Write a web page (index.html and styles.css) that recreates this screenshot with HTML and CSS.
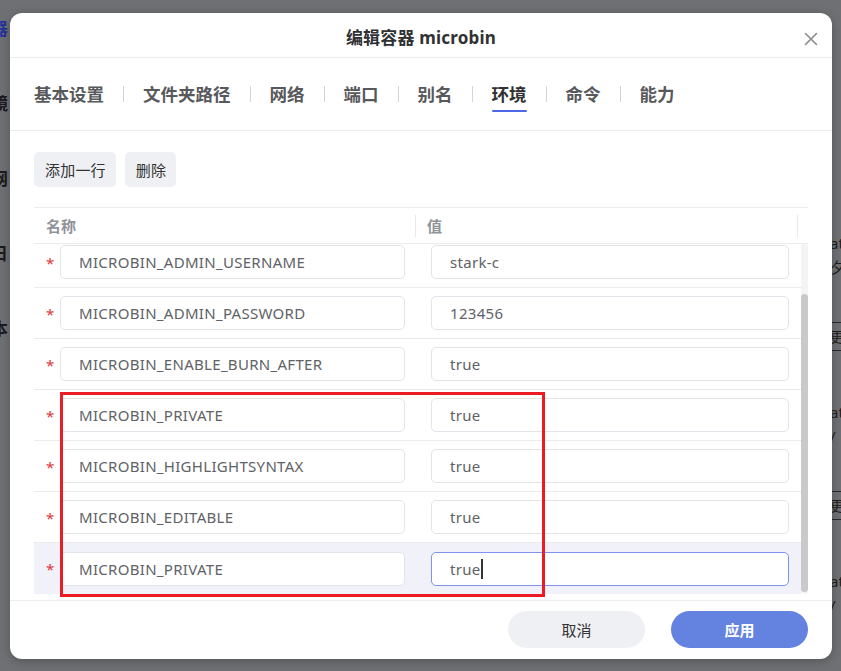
FILE: index.html
```html
<!DOCTYPE html>
<html lang="zh-CN">
<head>
<meta charset="utf-8">
<title>编辑容器 microbin</title>
<link rel="stylesheet" href="styles.css">
</head>
<body>
<div class="page">
  <div class="side-left">
    <span class="bg-item blue">器</span>
    <span class="bg-item">镜</span>
    <span class="bg-item">网</span>
    <span class="bg-item">日</span>
    <span class="bg-item">本</span>
  </div>
  <div class="side-right">
    <div class="card">
      <span class="bg-line">at</span>
      <span class="bg-line">夕</span>
      <span class="bg-btn">更</span>
    </div>
    <div class="card">
      <span class="bg-line">at</span>
      <span class="bg-line">/</span>
      <span class="bg-btn">更</span>
    </div>
    <div class="card">
      <span class="bg-line">at</span>
      <span class="bg-line">/</span>
    </div>
  </div>
</div>

<div class="modal">
  <div class="modal-header">
    <span class="modal-title">编辑容器 microbin</span>
    <svg class="close" width="14" height="14" viewBox="0 0 14 14"><path d="M1.5 1.5 L12.5 12.5 M12.5 1.5 L1.5 12.5" stroke="#8a8a8a" stroke-width="1.6" fill="none" stroke-linecap="round"/></svg>
  </div>
  <div class="tabs">
    <span class="tab">基本设置</span><span class="sep"></span>
    <span class="tab">文件夹路径</span><span class="sep"></span>
    <span class="tab">网络</span><span class="sep"></span>
    <span class="tab">端口</span><span class="sep"></span>
    <span class="tab">别名</span><span class="sep"></span>
    <span class="tab active">环境</span><span class="sep"></span>
    <span class="tab">命令</span><span class="sep"></span>
    <span class="tab">能力</span>
  </div>
  <div class="content">
    <div class="toolbar">
      <span class="btn">添加一行</span>
      <span class="btn">删除</span>
    </div>
    <div class="table">
      <div class="thead">
        <div class="th">名称</div>
        <div class="th bordered">值</div>
        <div class="th bordered"></div>
      </div>
      <div class="tbody">
        <div class="rows-view">
          <div class="rows">
            <div class="row"><div class="cell name"><span class="req">*</span><div class="field">MICROBIN_ADMIN_USERNAME</div></div><div class="cell val"><div class="field">stark-c</div></div></div>
            <div class="row"><div class="cell name"><span class="req">*</span><div class="field">MICROBIN_ADMIN_PASSWORD</div></div><div class="cell val"><div class="field">123456</div></div></div>
            <div class="row"><div class="cell name"><span class="req">*</span><div class="field">MICROBIN_ENABLE_BURN_AFTER</div></div><div class="cell val"><div class="field">true</div></div></div>
            <div class="row"><div class="cell name"><span class="req">*</span><div class="field">MICROBIN_PRIVATE</div></div><div class="cell val"><div class="field">true</div></div></div>
            <div class="row"><div class="cell name"><span class="req">*</span><div class="field">MICROBIN_HIGHLIGHTSYNTAX</div></div><div class="cell val"><div class="field">true</div></div></div>
            <div class="row"><div class="cell name"><span class="req">*</span><div class="field">MICROBIN_EDITABLE</div></div><div class="cell val"><div class="field">true</div></div></div>
            <div class="row hover"><div class="cell name"><span class="req">*</span><div class="field">MICROBIN_PRIVATE</div></div><div class="cell val"><div class="field focus">true<span class="caret"></span></div></div></div>
          </div>
        </div>
        <div class="scrollbar"><div class="thumb"></div></div>
      </div>
    </div>
  </div>
  <div class="footer">
    <span class="fbtn cancel">取消</span>
    <span class="fbtn apply">应用</span>
  </div>
  <div class="annot"></div>
</div>
</body>
</html>
```

FILE: styles.css
```css
* { box-sizing: border-box; }
html, body { margin: 0; padding: 0; }
body {
  width: 841px;
  height: 671px;
  overflow: hidden;
  background: #6f7073;
  font-family: "Noto Sans", "Noto Sans CJK SC", sans-serif;
  position: relative;
}
.page {
  display: flex;
  justify-content: space-between;
  height: 671px;
}
.side-left {
  display: flex;
  flex-direction: column;
  margin-left: -9px;
  padding-top: 17px;
  gap: 52px;
}
.bg-item {
  font-size: 17px;
  line-height: 23px;
  font-weight: 700;
  color: #1b1b1d;
}
.bg-item.blue { color: #26339a; }
.side-right {
  width: 11px;
  overflow: hidden;
  padding-top: 231px;
  display: flex;
  flex-direction: column;
  gap: 49px;
}
.card {
  display: flex;
  flex-direction: column;
  width: 40px;
}
.bg-line {
  font-size: 15px;
  line-height: 24px;
  color: #1e1e20;
}
.bg-btn {
  margin-top: 43px;
  border-top: 1px solid #2a2a2c;
  border-bottom: 1px solid #2a2a2c;
  font-size: 14px;
  line-height: 27px;
  color: #1e1e20;
}

.modal {
  position: absolute;
  left: 10px;
  top: 13px;
  width: 822px;
  height: 646px;
  background: #fff;
  border-radius: 12px;
  box-shadow: 0 2px 10px rgba(0,0,0,0.25);
  display: flex;
  flex-direction: column;
}
.modal-header {
  position: relative;
  height: 45px;
  border-bottom: 1px solid #ececec;
  display: flex;
  align-items: center;
  justify-content: center;
  padding-top: 3px;
}
.modal-title {
  font-size: 17px;
  font-weight: 700;
  color: #303133;
  letter-spacing: 0.2px;
}
.close {
  position: absolute;
  right: 14px;
  top: 19px;
}
.tabs {
  height: 73px;
  border-bottom: 1px solid #ececec;
  display: flex;
  align-items: center;
  padding-left: 24px;
}
.tab {
  position: relative;
  font-size: 17.5px;
  font-weight: 700;
  color: #58595c;
  line-height: 24px;
}
.tab.active { color: #303133; }
.tab.active::after {
  content: "";
  position: absolute;
  left: 0;
  right: 0;
  bottom: -6px;
  height: 2px;
  background: #4d68e6;
  border-radius: 1px;
}
.sep {
  width: 1px;
  height: 16px;
  background: #d4d4d6;
  margin: 0 19px;
}
.content {
  padding: 21px 24px 0;
  flex: 1;
}
.toolbar {
  display: flex;
  gap: 9px;
  height: 35px;
}
.btn {
  display: flex;
  align-items: center;
  padding: 0 10px 0 11px;
  height: 35px;
  background: #eef0f4;
  border-radius: 5px;
  font-size: 15px;
  letter-spacing: 0.2px;
  color: #333;
}
.table {
  margin-top: 20px;
  border-top: 1px solid #ebebeb;
}
.thead {
  display: grid;
  grid-template-columns: 381px 382px 1fr;
  height: 36px;
  border-bottom: 1px solid #ebebeb;
}
.th {
  position: relative;
  display: flex;
  align-items: center;
  padding-left: 12px;
  font-size: 15px;
  font-weight: 700;
  color: #909399;
}
.th.bordered::before {
  content: "";
  position: absolute;
  left: 0;
  top: 7px;
  bottom: 6px;
  width: 1px;
  background: #e8e8ea;
}
.tbody {
  display: flex;
  height: 350px;
}
.rows-view {
  width: 767px;
  height: 350px;
  overflow: hidden;
}
.rows { margin-top: -7px; }
.row {
  display: grid;
  grid-template-columns: 383px 384px;
  height: 51px;
  border-bottom: 1px solid #ebebeb;
}
.row.hover { background: #f0f1f9; border-bottom: none; }
.cell {
  display: flex;
  align-items: center;
  padding: 8px 12px 8px 14px;
}
.cell.name { padding-left: 12px; }
.req {
  width: 14px;
  color: #e0343a;
  font-size: 15px;
  line-height: 15px;
  padding-top: 2px;
}
.field {
  flex: 1;
  height: 34px;
  border: 1px solid #e2e4ea;
  border-radius: 5px;
  background: #fff;
  display: flex;
  align-items: center;
  padding-left: 18px;
  font-size: 15px;
  letter-spacing: 0.3px;
  color: #606266;
}
.field.focus { border-color: #7d93ee; }
.caret {
  display: inline-block;
  width: 2px;
  height: 20px;
  background: #333;
}
.scrollbar {
  width: 7px;
  height: 350px;
  background: #f4f4f5;
  border-radius: 3px;
}
.thumb {
  margin-top: 50px;
  width: 7px;
  height: 298px;
  background: #c9c9cb;
  border-radius: 4px;
}
.footer {
  height: 59px;
  border-top: 1px solid #ececec;
  margin-top: 6px;
  display: flex;
  align-items: center;
  justify-content: flex-end;
  padding-right: 24px;
  padding-bottom: 1px;
  gap: 26px;
}
.fbtn {
  width: 137px;
  height: 37px;
  border-radius: 19px;
  display: flex;
  align-items: center;
  justify-content: center;
  font-size: 15px;
}
.cancel { background: #eff0f4; color: #333; }
.apply { background: #6482e0; color: #fff; font-weight: 700; }
.annot {
  position: absolute;
  left: 50px;
  top: 379px;
  width: 485px;
  height: 205px;
  border: 3px solid #ec1c24;
}
```
